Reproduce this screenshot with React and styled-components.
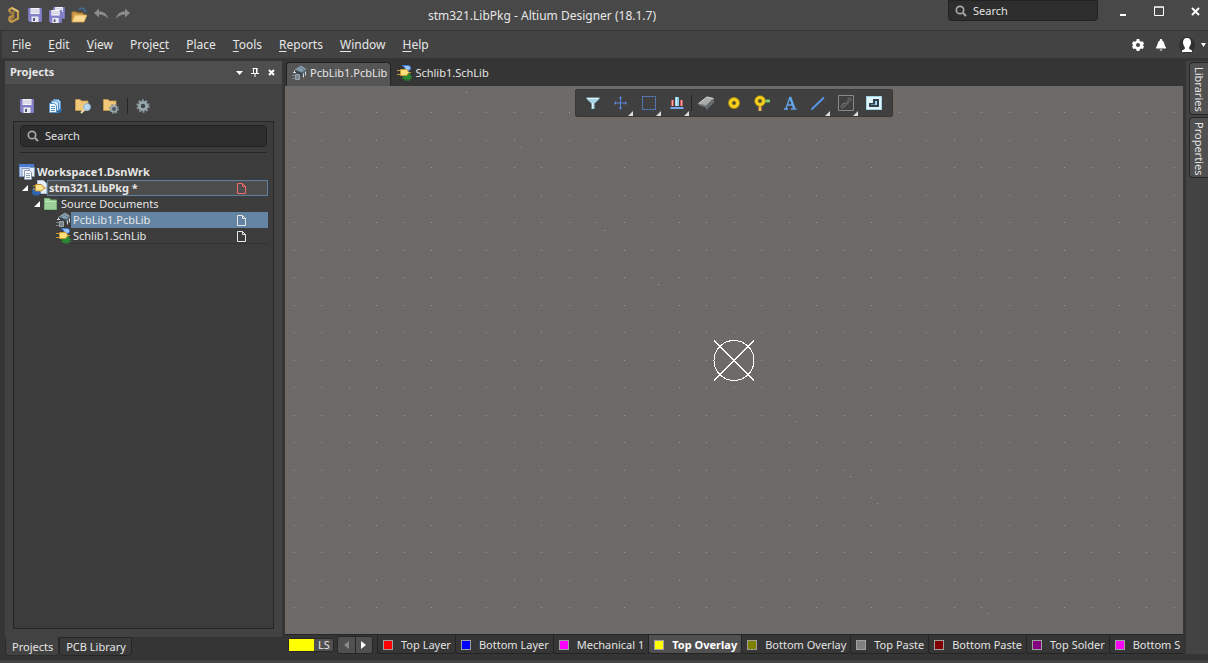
import React from "react";
import styled, { createGlobalStyle, css } from "styled-components";

const GlobalStyle = createGlobalStyle`
  *, *::before, *::after { box-sizing: border-box; }
  body { margin: 0; background: #353535; }
  button, input { font: inherit; color: inherit; }
  button { background: none; border: 0; padding: 0; margin: 0; cursor: pointer; }
  svg { display: block; flex: none; }
`;

const Window = styled.div`
  display: flex;
  flex-direction: column;
  min-height: 100vh;
  background: #353535;
  color: #e6e6e6;
  font: 11px/16px "Noto Sans", "Open Sans", sans-serif;
`;

/* ---------- title bar ---------- */

const TitleBar = styled.header`
  display: flex;
  align-items: flex-start;
  height: 31px;
  background: #484848;
  border-bottom: 1px solid #343434;
`;

const QuickAccess = styled.div`
  display: flex;
  align-items: center;
  gap: 6px;
  width: 136px;
  height: 30px;
  padding-left: 5px;
`;

const IconButton = styled.button`
  display: flex;
  align-items: center;
  justify-content: center;
  flex: none;
  gap: 6px;
  width: ${(p) => p.$w || 16}px;
  height: 16px;
`;

const Title = styled.h1`
  flex: 1;
  margin: 0;
  text-align: center;
  font-size: 12px;
  font-weight: 400;
  line-height: 31px;
  white-space: nowrap;
`;

const SearchField = styled.label`
  display: flex;
  align-items: center;
  gap: 6px;
  flex: none;
  height: ${(p) => (p.$top ? 21 : 22)}px;
  width: ${(p) => (p.$top ? "150px" : "auto")};
  padding: 0 6px;
  background: #2d2d2d;
  border: 1px solid #222;
  border-radius: ${(p) => (p.$top ? "0 0 4px 4px" : "4px")};
`;

const SearchInput = styled.input`
  flex: 1;
  min-width: 0;
  padding: 0;
  border: 0;
  outline: 0;
  background: none;
  &::placeholder { color: #e2e2e2; opacity: 1; }
`;

const WindowControls = styled.div`
  display: flex;
  align-items: center;
  gap: 20px;
  height: 22px;
  padding: 0 5px 0 17px;
`;

/* ---------- menu bar ---------- */

const MenuBar = styled.nav`
  display: flex;
  align-items: center;
  height: 27px;
  padding-left: 4px;
  background: #434343;
  border-left: 2px solid #383838;
`;

const MenuItem = styled.button`
  padding: 0 6px;
  margin-right: 5px;
  font-size: 12px;
  line-height: 24px;
`;

const Mnemonic = styled.span`
  text-decoration: underline;
  text-underline-offset: 2px;
`;

const AccountTools = styled.div`
  display: flex;
  align-items: center;
  gap: 7px;
  margin-left: auto;
`;

/* ---------- main area ---------- */

const Main = styled.main`
  display: flex;
  flex: 1;
  padding-top: 3px;
`;

const SidePanel = styled.aside`
  display: flex;
  flex-direction: column;
  flex: none;
  width: 285px;
  padding: 0 3px 4px 5px;
`;

const PanelHeader = styled.div`
  display: flex;
  align-items: center;
  gap: 8px;
  height: 23px;
  padding: 0 7px 0 5px;
  background: #4e4e4e;
`;

const PanelTitle = styled.h2`
  flex: 1;
  margin: 0 0 2px;
  font-size: 11px;
  line-height: 20px;
  font-weight: 700;
`;

const PanelBody = styled.div`
  display: flex;
  flex-direction: column;
  flex: 1;
  padding: 0 8px 8px;
  background: #424242;
`;

const PanelToolbar = styled.div`
  display: flex;
  align-items: center;
  gap: 12px;
  height: 37px;
  padding: 6px 6px 0;
`;

const ToolbarTail = styled.div`
  display: flex;
  align-items: center;
  gap: 7px;
  margin-left: -4px;
`;

const Divider = styled.span`
  width: 1px;
  height: 16px;
  background: #262626;
`;

const TreeBox = styled.section`
  flex: 1;
  padding: 3px 6px 0;
  background: #3c3c3c;
  border: 1px solid #262626;
`;

const TreeRule = styled.hr`
  height: 1px;
  margin: 5px 0 11px;
  border: 0;
  background: #262626;
`;

const Tree = styled.div`
  display: flex;
  flex-direction: column;
  margin: 0 -1px;
`;

const TreeRow = styled.div`
  display: flex;
  align-items: center;
  height: 16px;
  padding-left: ${(p) => p.$indent}px;
`;

const Twist = styled.button`
  display: flex;
  width: 12px;
  height: 16px;
  align-items: center;
  justify-content: flex-start;
  padding-left: 3px;
`;

const TreeLabel = styled.button`
  display: flex;
  align-items: center;
  justify-content: space-between;
  flex: 1;
  height: 16px;
  padding: 0 21px 0 1px;
  text-align: left;
  font-weight: ${(p) => (p.$bold ? 700 : 400)};
  line-height: 14px;
  white-space: nowrap;
  border: 1px solid transparent;
  ${(p) => p.$tone === "outlined" && css`background: #4d4d4d; border-color: #5f7f9c;`}
  ${(p) => p.$tone === "selected" && css`background: #6384a3; border-color: #6384a3;`}
  ${(p) => p.$tone === "lined" && css`border-bottom-color: #333;`}
`;

const PanelTabs = styled.div`
  display: flex;
  height: 19px;
`;

const PanelTab = styled.button`
  padding: 0 5px 0 6px;
  line-height: 18px;
  background: ${(p) => (p.$active ? "#424242" : "#3a3a3a")};
  border: 1px solid ${(p) => (p.$active ? "#2c2c2c" : "#262626")};
  border-top-color: ${(p) => (p.$active ? "#424242" : "#262626")};
  border-radius: 0 0 4px 4px;
`;

/* ---------- editor ---------- */

const Editor = styled.section`
  display: flex;
  flex-direction: column;
  flex: 1;
  min-width: 0;
`;

const DocTabs = styled.div`
  display: flex;
  height: 25px;
  padding-left: 1px;
`;

const DocTab = styled.button`
  display: flex;
  align-items: center;
  gap: 3px;
  height: 24px;
  margin-top: 1px;
  padding: 0 3px 2px 4px;
  border: 1px solid transparent;
  border-radius: 4px 4px 0 0;
  ${(p) => p.$active && css`background: #555; border-color: #222; border-bottom-color: #555;`}
`;

const Canvas = styled.div`
  position: relative;
  flex: 1;
  overflow: hidden;
  background: #6e6a68;
`;

const GridLayer = styled.svg`
  position: absolute;
  inset: 0;
  width: 100%;
  height: 100%;
`;

const ActiveBar = styled.div`
  position: relative;
  display: flex;
  align-items: center;
  width: 318px;
  height: 28px;
  margin: 3px auto 0;
  padding-left: 3px;
  background: #404040;
  border: 1px solid #383838;
  border-radius: 2px;
`;

const ActiveTool = styled.button`
  position: relative;
  display: flex;
  align-items: center;
  justify-content: center;
  width: 28px;
  height: 26px;
  ${(p) => p.$more && css`
    &::after {
      content: "";
      position: absolute;
      right: 2px;
      bottom: 0;
      border: solid transparent;
      border-width: 0 0 5px 5px;
      border-bottom-color: #ddd;
    }
  `}
`;

const ToolDivider = styled.span`
  width: 1px;
  height: 16px;
  background: #262626;
`;

const LayerBar = styled.div`
  display: flex;
  height: 26px;
  padding: 0 0 0 3px;
  border-top: 1px solid #262626;
  overflow: hidden;
`;

const LayerSet = styled.button`
  display: flex;
  flex: none;
  height: 14px;
  width: 46px;
  margin: 3px 3px 0 0;
  line-height: 12px;
  background: #505050;
  border: 1px solid #262626;
  border-radius: 3px;
`;

const LayerSetColor = styled.span`
  width: 25px;
  height: 12px;
  margin-right: 4px;
  background: #ff0;
`;

const Pager = styled.div`
  display: flex;
  flex: none;
  width: 36px;
  height: 18px;
  margin: 1px 4px 0 0;
  background: #505050;
  border: 1px solid #262626;
  border-radius: 3px;
`;

const PagerButton = styled.button`
  display: flex;
  align-items: center;
  justify-content: center;
  flex: 1;
  & + & { border-left: 1px solid #262626; }
`;

const LayerTab = styled.button`
  display: flex;
  align-items: center;
  flex: none;
  gap: 8px;
  height: 19px;
  padding: 1px 4px 0 5px;
  line-height: 16px;
  white-space: nowrap;
  background: ${(p) => (p.$active ? "#505050" : "#363636")};
  color: ${(p) => (p.$active ? "#fff" : "#e2e2e2")};
  font-weight: ${(p) => (p.$active ? 700 : 400)};
  border: solid #242424;
  border-width: 0 0 1px 1px;
  border-radius: 0 0 3px 3px;
`;

const Swatch = styled.span`
  width: 10px;
  height: 10px;
  background: ${(p) => p.$color};
  border: 1px solid #a0a0a0;
`;

const Dock = styled.aside`
  display: flex;
  flex-direction: column;
  gap: 2px;
  flex: none;
  width: 22px;
  margin: 0 0 6px 3px;
  padding: 1px 0 0 3px;
  background: #434343;
`;

const DockTab = styled.button`
  writing-mode: vertical-rl;
  padding: 4px 0 2px;
  line-height: 16px;
  text-align: left;
  background: #505050;
  border: 1px solid #262626;
  border-right: 0;
  border-radius: 4px 0 0 4px;
`;

const StatusBar = styled.footer`
  height: 3px;
  background: #434343;
`;

/* ---------- icons ---------- */

const Svg = ({ w = 16, h = 16, children, ...rest }) => (
  <svg width={w} height={h} viewBox={`0 0 ${w} ${h}`} aria-hidden="true" {...rest}>{children}</svg>
);

const LogoIcon = () => (
  <Svg>
    <path d="M4.500 5V2.500L7 1l6 3.500v7L6.500 15 4.500 13.500V10.500L8.500 8" fill="none" stroke="#c49a4d" strokeWidth="2.200" />
    <path d="M4.500 6.500l4-1.500v5.500l-3 2" fill="none" stroke="#a37c38" strokeWidth="2" />
    <path d="M7 1l6 3.500" stroke="#e4c47b" strokeWidth="1.500" />
  </Svg>
);

const Floppy = ({ x = 0, y = 0, s = 14 }) => (
  <svg x={x} y={y} width={s} height={s} viewBox="0 0 14 14">
    <path d="M.5.5h13v13h-12l-1-1z" fill="#8481c9" stroke="#7a77bb" />
    <path d="M2.500 0h9v6h-9z" fill="#f4f4fb" />
    <path d="M3 2h8M3 4h8" stroke="#c3c3d6" />
    <path d="M3.500 8.500h7V14h-7z" fill="#e9e9f2" />
    <path d="M5 10h2v3H5z" fill="#56547c" />
  </svg>
);
const SaveIcon = () => <Svg><Floppy x={1} y={1} /></Svg>;
const SaveAllIcon = () => (
  <Svg>
    <Floppy x={4} y={0} s={12} />
    <Floppy x={0} y={3} s={13} />
  </Svg>
);

const OpenIcon = () => (
  <Svg>
    <path d="M1 15V5h4l1 1h6v3" fill="#d29c4a" stroke="#b07d33" />
    <path d="M1 15l3-7h12l-3 7z" fill="#fbd88f" stroke="#d6a552" strokeWidth=".8" />
    <path d="M8 2.500c2-2 5-1.500 6 1" fill="none" stroke="#3f6f98" strokeWidth="1.500" />
    <path d="M12 3.500h4l-2 2.500z" fill="#3f6f98" />
  </Svg>
);

const UndoIcon = ({ flip }) => (
  <Svg>
    <g transform={flip ? "translate(16 0) scale(-1 1)" : undefined}>
      <path d="M1 6l5-4.500v3c5 0 8 2 9 7.500-2-3-5-4.500-9-4.500v3z" fill="#8b8b8b" />
    </g>
  </Svg>
);

const SearchIcon = () => (
  <Svg w={12} h={12}>
    <circle cx="5" cy="5" r="3.700" fill="none" stroke="#a8a8a8" strokeWidth="1.700" />
    <path d="M8 8l3 3" stroke="#a8a8a8" strokeWidth="2" />
  </Svg>
);

const CopyDocsIcon = () => (
  <Svg>
    <path d="M6.500 1.500h5l2 2v8h-7z" fill="#a9d2f4" stroke="#5c95c7" />
    <path d="M4.500 3h5l2 2v7.500h-7z" fill="#d3e9fb" stroke="#5c95c7" />
    <path d="M2.500 5.500h5l2 2v7h-7z" fill="#f3faff" stroke="#5c95c7" />
    <path d="M4 8.500h4M4 10.500h4M4 12.500h4" stroke="#5c95c7" />
    <path d="M10 14.500c3 0 4-2 4-4" fill="none" stroke="#2e7cc2" strokeWidth="1.500" />
  </Svg>
);

const Folder = () => (
  <path d="M.5 12.500V1.500H5L6.500 3H13v9.500z" fill="#f1c877" stroke="#c99f55" strokeWidth=".8" />
);
const FolderFindIcon = () => (
  <Svg>
    <Folder />
    <path d="M10 11l-4 4" stroke="#f2dfb2" strokeWidth="2" />
    <circle cx="12" cy="9" r="3.500" fill="#b9d8ed" stroke="#8fb2ca" />
  </Svg>
);
const FolderGearIcon = () => (
  <Svg>
    <Folder />
    <circle cx="11" cy="11" r="4.300" fill="none" stroke="#79878d" strokeWidth="1.500" strokeDasharray="1.700 1.700" />
    <circle cx="11" cy="11" r="2.800" fill="#48525a" stroke="#98a6ab" strokeWidth="1.800" />
  </Svg>
);
const GearIcon = () => (
  <Svg>
    <circle cx="8" cy="8" r="5.700" fill="none" stroke="#87959b" strokeWidth="2" strokeDasharray="2 1.580" />
    <circle cx="8" cy="8" r="3.700" fill="#3e474c" stroke="#9aa9ae" strokeWidth="2.800" />
  </Svg>
);

const WhiteGear = () => (
  <Svg w={14} h={14}>
    <path d="M5.500 1h3l.5 2 1.500.8 2-.6L14 5.800l-1.500 1.400L14 8.600l-1.500 2.500-2-.5L9 11.500 8.500 13h-3L5 11.500l-1.500-.9-2 .5L0 8.600l1.500-1.400L0 5.800l1.500-2.600 2 .6L5 3z" fill="#fff" transform="translate(1 0) scale(.86 1)" />
    <circle cx="7" cy="7" r="2" fill="#434343" />
  </Svg>
);
const Bell = () => (
  <Svg w={12} h={14}>
    <path d="M5 1h2v1.500C9.500 3 9 7 11 9.500v1H1v-1C3 7 2.500 3 5 2.500zM4.500 11.500h3L6 13z" fill="#fff" />
  </Svg>
);
const Person = () => (
  <Svg>
    <circle cx="8" cy="8" r="8" fill="#303030" />
    <path d="M8 1c3 0 4 2 4 4.500S10.500 9 10 11c0 1 1 1.500 3 2.500v1.500H3v-1.500c2-1 3-1.500 3-2.500C5.500 9 4 8 4 5.500S5 1 8 1z" fill="#fff" />
  </Svg>
);
const Caret = ({ w = 7 }) => (
  <Svg w={w} h={4}><path d={`M0 0h${w}L${w / 2} 4z`} fill="#fff" /></Svg>
);
const Pin = () => (
  <Svg w={8} h={9}>
    <path d="M1.500.5h5M2.500 0v5M5.500 0v5M0 5.500h8M4 6v3" fill="none" stroke="#fff" />
    <path d="M5 0h1.500v5H5z" fill="#fff" />
  </Svg>
);
const Cross = ({ s = 8 }) => (
  <Svg w={s} h={s}><path d={`M1 1l${s - 2} ${s - 2}M${s - 1} 1L1 ${s - 1}`} stroke="#fff" strokeWidth="2" /></Svg>
);

const WorkspaceIcon = () => (
  <Svg>
    <path d="M.5 1.500h14v11H.5z" fill="#bed1f0" stroke="#7795cf" />
    <path d="M0 0h15v3H0z" fill="#4a7bd0" />
    <path d="M3 4.500h7v8H3z" fill="#eef3fb" stroke="#8698b5" />
    <path d="M11 3.500h4.500v9H11" fill="#e6eefa" stroke="#8698b5" />
    <path d="M5.500 6.500h5l2 2v7h-7z" fill="#fff" stroke="#8698b5" />
    <path d="M7 9.500h4M7 11.500h4M7 13.500h4" stroke="#8ba0bd" />
  </Svg>
);

const LibPkgIcon = () => (
  <Svg>
    <path d="M6.500.5h6l3 3v10h-9z" fill="#e8eef9" stroke="#b5c0d2" />
    <path d="M2 9h7v5H2zM3 8v8M5 8v8M7 8v8M1 10h9M1 13h9" fill="#2f66b8" stroke="#2f66b8" />
    <path d="M4.500 4.500h6l3 3.500-3 3h-6z" fill="#ffe38b" stroke="#b98a2b" />
    <path d="M2 6h2.500M2 9h2.500M13 8h3" stroke="#d3a445" />
  </Svg>
);

const GreenFolder = () => (
  <Svg>
    <path d="M1.500 13.500v-11h5L7.500 4h6v9.500z" fill="#9bd09b" stroke="#79b37a" />
    <path d="M2 5.500h11" stroke="#c3e8c1" />
  </Svg>
);

const PcbLibIcon = () => (
  <Svg>
    <path d="M4 5l6-4 5 3.500-4 3.500z" fill="#6f8797" />
    <path d="M4 5l6-4 5 3.500M7 3l5 3.500M12.500 2.500L8 6" fill="none" stroke="#93aab8" />
    <path d="M4 5v2l7 4V8z" fill="#37434d" />
    <path d="M11 8l4-3.500v3L11 11z" fill="#52626e" />
    <path d="M12.500 8.500v4M14.500 6.500v4M3.500 5.500v2M2 7.500h3" stroke="#d3dade" />
    <path d="M4.500 9.500h4v5h-4z" fill="#78848c" stroke="#9aa5ab" />
    <path d="M1 10.500h3M1 13.500h3" stroke="#7d888e" />
  </Svg>
);

const SchLibIcon = () => (
  <Svg>
    <path d="M8 9h6v5H8zM9 8v8M11 8v8M13 8v8M6 11.500h10M6 13.500h10" fill="#2b8a33" stroke="#2b8a33" />
    <path d="M6 .5h6c3.500 0 3.500 5 0 5H8c2-1 1-4-2-5z" fill="#9cc4f8" stroke="#3f78cc" />
    <path d="M4.500 4.500h6l2.500 3-2.500 3h-6z" fill="#ffe07c" stroke="#c79a33" />
    <path d="M1 5.500h3.500M1 9.500h3.500M13 7.500h2" stroke="#c79a33" />
  </Svg>
);

const PageIcon = ({ color = "#e6e6e6" }) => (
  <Svg w={9} h={11}>
    <path d="M.5.5h5l3 3v7h-8zM5.500.5v3h3" fill="none" stroke={color} />
  </Svg>
);
const TwistIcon = () => <Svg w={6} h={6}><path d="M6 0v6H0z" fill="#fff" /></Svg>;

const FilterIcon = () => (
  <Svg>
    <path d="M1.500 2.500h13V4L9.500 8.500V14h-3V8.500L1.500 4z" fill="#a7d4e6" />
    <path d="M3 3.500h10M7.500 8v5" stroke="#e3f5fb" />
  </Svg>
);
const MoveIcon = () => (
  <Svg><path d="M7.500 1.500v13M1 8h13M6 3h3M6 13h3M2.500 6.500v3M12.500 6.500v3" stroke="#5a86dc" /></Svg>
);
const MarqueeIcon = () => (
  <Svg><path d="M1.500 1.500h13v13h-13z" fill="none" stroke="#5f8eea" strokeDasharray="2 1" /></Svg>
);
const AlignIcon = () => (
  <Svg>
    <path d="M6 2h4v9H6z" fill="#8ccbe5" />
    <path d="M7.500 2v9" stroke="#dcf4fb" />
    <path d="M2 5h3v6H2zM11 5h3v6h-3z" fill="#c95454" />
    <path d="M3.500 5v6M12.500 5v6" stroke="#f3a7a7" />
    <path d="M1.500 13h13" stroke="#7aa8f2" strokeWidth="2" />
  </Svg>
);
const ChipIcon = () => (
  <Svg>
    <path d="M9 9.500v5M11 8v4.500M13 6v4.500M15 4v4.500" stroke="#8e9ca3" />
    <path d="M.5 8.500l7.500 2v2L.5 10z" fill="#76797a" />
    <path d="M.5 8.500L9 2l6.500 1.500L8 10.500z" fill="#a9abab" />
    <path d="M.5 8.500L9 2l6.500 1.500" fill="none" stroke="#d5d7d7" />
  </Svg>
);
const PadIcon = () => (
  <Svg>
    <circle cx="8" cy="8" r="5.500" fill="#f6d01d" stroke="#b18d0c" strokeWidth=".8" />
    <circle cx="8" cy="8" r="1.800" fill="#404040" stroke="#907414" />
  </Svg>
);
const ViaIcon = () => (
  <Svg>
    <path d="M10 6h6" stroke="#58bd50" strokeWidth="3" />
    <path d="M10 6h6" stroke="#a5e69c" />
    <path d="M6 9v7" stroke="#e7a13b" strokeWidth="3" />
    <path d="M6 10v6" stroke="#ffd58b" />
    <circle cx="6" cy="6" r="5.300" fill="#f6d01d" stroke="#ad8b12" strokeWidth=".7" />
    <circle cx="6" cy="6" r="1.800" fill="#404040" stroke="#8e751d" />
  </Svg>
);
const LetterIcon = () => (
  <Svg>
    <path d="M2 14h4M9 14h5.500M4 13.500L8 2M5.500 10H11" fill="none" stroke="#62a6ec" strokeWidth="1.300" />
    <path d="M8 2l4.300 11.500" stroke="#62a6ec" strokeWidth="2.400" />
  </Svg>
);
const LineIcon = () => (
  <Svg><path d="M1.500 14.500l12.500-12" stroke="#5797eb" strokeWidth="1.800" /></Svg>
);
const MeasureIcon = () => (
  <Svg>
    <path d="M.5.500h15v15H.5z" fill="none" stroke="#888" />
    <circle cx="4.500" cy="11.500" r="1.500" fill="none" stroke="#777" />
    <circle cx="11.500" cy="4.500" r="1.500" fill="none" stroke="#777" />
    <path d="M5 10V8.500h2L9 7.500V6.500l1-1M6 11h1l4-4" fill="none" stroke="#777" />
  </Svg>
);
const RegionIcon = () => (
  <Svg>
    <path d="M0 1h16v14H0z" fill="#a3d3e6" />
    <path d="M1 2h14v12H1z" fill="#dff4fc" />
    <path d="M7 4h6v8H3V8h4z" fill="#2f424e" />
    <path d="M9 6h2v4H5V9.500h4z" fill="#a3d3e6" />
  </Svg>
);

/* ---------- data ---------- */

const MENUS = [
  ["", "F", "ile"], ["", "E", "dit"], ["", "V", "iew"], ["Proje", "c", "t"], ["", "P", "lace"],
  ["", "T", "ools"], ["", "R", "eports"], ["", "W", "indow"], ["", "H", "elp"],
];

const LAYERS = [
  ["Top Layer", "#ff0000"], ["Bottom Layer", "#0000ff"], ["Mechanical 1", "#ff00ff"],
  ["Top Overlay", "#ffff00"], ["Bottom Overlay", "#808000"], ["Top Paste", "#808080"],
  ["Bottom Paste", "#800000"], ["Top Solder", "#800080"], ["Bottom S", "#ff00ff"],
];

const TOOLS = [
  ["Filter", FilterIcon], ["Move", MoveIcon, true], ["Select", MarqueeIcon, true],
  ["Align", AlignIcon, true], ["Component", ChipIcon, false, true], ["Pad", PadIcon],
  ["Via", ViaIcon], ["String", LetterIcon], ["Line", LineIcon, true],
  ["Dimension", MeasureIcon, true], ["Region", RegionIcon],
];

const DIAGONAL = [-268, -213, -130, -76, 61, 116, 143, 253];

function Grid() {
  return (
    <GridLayer aria-hidden="true" shapeRendering="crispEdges">
      <defs>
        <pattern id="fine" width="11" height="11" patternUnits="userSpaceOnUse">
          <path d="M0 0h1v1H0zM5 0h1v1H5zM0 5h1v1H0zM5 5h1v1H5z" fill="#686462" />
        </pattern>
        <pattern id="coarse" width="55" height="55" patternUnits="userSpaceOnUse">
          <path d="M0 0h1v1H0zM27 0h1v1h-1zM0 27h1v1H0zM27 27h1v1h-1z" fill="#9c9895" />
        </pattern>
      </defs>
      <svg x="50%" y="50%" overflow="visible">
        <rect x="-2200" y="-2200" width="4400" height="4400" fill="url(#fine)" />
        <rect x="-2200" y="-2200" width="4400" height="4400" fill="url(#coarse)" />
        {DIAGONAL.map((d) => <rect key={d} x={d} y={d} width="1" height="1" fill="#9c9895" />)}
        <g fill="none" stroke="#fff" transform="translate(0 .5)">
          <circle cx="0" cy="0" r="20" />
          <path d="M-20-20l40 40M20-20l-40 40" />
        </g>
      </svg>
    </GridLayer>
  );
}

export default function App() {
  return (
    <Window>
      <GlobalStyle />
      <TitleBar>
        <QuickAccess>
          <LogoIcon />
          <IconButton aria-label="Save"><SaveIcon /></IconButton>
          <IconButton aria-label="Save all"><SaveAllIcon /></IconButton>
          <IconButton aria-label="Open"><OpenIcon /></IconButton>
          <IconButton aria-label="Undo"><UndoIcon /></IconButton>
          <IconButton aria-label="Redo"><UndoIcon flip /></IconButton>
        </QuickAccess>
        <Title>stm321.LibPkg - Altium Designer (18.1.7)</Title>
        <SearchField $top>
          <SearchIcon />
          <SearchInput type="text" placeholder="Search" aria-label="Search commands" />
        </SearchField>
        <WindowControls>
          <IconButton aria-label="Minimize">
            <Svg w={10} h={10}><path d="M2 9h6" stroke="#fff" strokeWidth="2" /></Svg>
          </IconButton>
          <IconButton aria-label="Maximize">
            <Svg w={10} h={10}><path d="M.5 1h9v8.500h-9zM0 1h10" fill="none" stroke="#fff" /></Svg>
          </IconButton>
          <IconButton aria-label="Close"><Cross s={9} /></IconButton>
        </WindowControls>
      </TitleBar>

      <MenuBar>
        {MENUS.map(([a, k, b]) => (
          <MenuItem key={a + k + b}>{a}<Mnemonic>{k}</Mnemonic>{b}</MenuItem>
        ))}
        <AccountTools>
          <IconButton aria-label="Preferences"><WhiteGear /></IconButton>
          <IconButton aria-label="Notifications"><Bell /></IconButton>
          <IconButton $w={32} aria-label="Account"><Person /><Caret w={5} /></IconButton>
        </AccountTools>
      </MenuBar>

      <Main>
        <SidePanel>
          <PanelHeader>
            <PanelTitle>Projects</PanelTitle>
            <IconButton $w={8} aria-label="Panel menu"><Caret /></IconButton>
            <IconButton $w={8} aria-label="Pin"><Pin /></IconButton>
            <IconButton $w={8} aria-label="Close panel"><Cross s={7} /></IconButton>
          </PanelHeader>
          <PanelBody>
            <PanelToolbar>
              <IconButton aria-label="Save document"><SaveIcon /></IconButton>
              <IconButton aria-label="Compile"><CopyDocsIcon /></IconButton>
              <IconButton aria-label="Explore"><FolderFindIcon /></IconButton>
              <IconButton aria-label="Project options"><FolderGearIcon /></IconButton>
              <ToolbarTail>
                <Divider />
                <IconButton aria-label="Settings"><GearIcon /></IconButton>
              </ToolbarTail>
            </PanelToolbar>
            <TreeBox>
              <SearchField>
                <SearchIcon />
                <SearchInput type="text" placeholder="Search" aria-label="Search projects" />
              </SearchField>
              <TreeRule />
              <Tree>
                <TreeRow $indent={0}>
                  <WorkspaceIcon />
                  <TreeLabel $bold>Workspace1.DsnWrk</TreeLabel>
                </TreeRow>
                <TreeRow $indent={0}>
                  <Twist aria-label="Collapse project"><TwistIcon /></Twist>
                  <LibPkgIcon />
                  <TreeLabel $bold $tone="outlined">stm321.LibPkg *<PageIcon color="#f06a6a" /></TreeLabel>
                </TreeRow>
                <TreeRow $indent={12}>
                  <Twist aria-label="Collapse folder"><TwistIcon /></Twist>
                  <GreenFolder />
                  <TreeLabel>Source Documents</TreeLabel>
                </TreeRow>
                <TreeRow $indent={36}>
                  <PcbLibIcon />
                  <TreeLabel $tone="selected">PcbLib1.PcbLib<PageIcon /></TreeLabel>
                </TreeRow>
                <TreeRow $indent={36}>
                  <SchLibIcon />
                  <TreeLabel $tone="lined">Schlib1.SchLib<PageIcon /></TreeLabel>
                </TreeRow>
              </Tree>
            </TreeBox>
          </PanelBody>
          <PanelTabs>
            <PanelTab $active>Projects</PanelTab>
            <PanelTab>PCB Library</PanelTab>
          </PanelTabs>
        </SidePanel>

        <Editor>
          <DocTabs>
            <DocTab $active><PcbLibIcon />PcbLib1.PcbLib</DocTab>
            <DocTab><SchLibIcon />Schlib1.SchLib</DocTab>
          </DocTabs>
          <Canvas>
            <Grid />
            <ActiveBar>
              {TOOLS.map(([name, Icon, more, divided]) => (
                <React.Fragment key={name}>
                  {divided && <ToolDivider />}
                  <ActiveTool aria-label={name} $more={more}><Icon /></ActiveTool>
                </React.Fragment>
              ))}
            </ActiveBar>
          </Canvas>
          <LayerBar>
            <LayerSet><LayerSetColor />LS</LayerSet>
            <Pager>
              <PagerButton aria-label="Previous layers"><Svg w={5} h={8}><path d="M5 0v8L0 4z" fill="#8a8a8a" /></Svg></PagerButton>
              <PagerButton aria-label="Next layers"><Svg w={5} h={8}><path d="M0 0v8l5-4z" fill="#fff" /></Svg></PagerButton>
            </Pager>
            {LAYERS.map(([name, color]) => (
              <LayerTab key={name} $active={name === "Top Overlay"}><Swatch $color={color} />{name}</LayerTab>
            ))}
          </LayerBar>
        </Editor>

        <Dock>
          <DockTab>Libraries</DockTab>
          <DockTab>Properties</DockTab>
        </Dock>
      </Main>
      <StatusBar />
    </Window>
  );
}
